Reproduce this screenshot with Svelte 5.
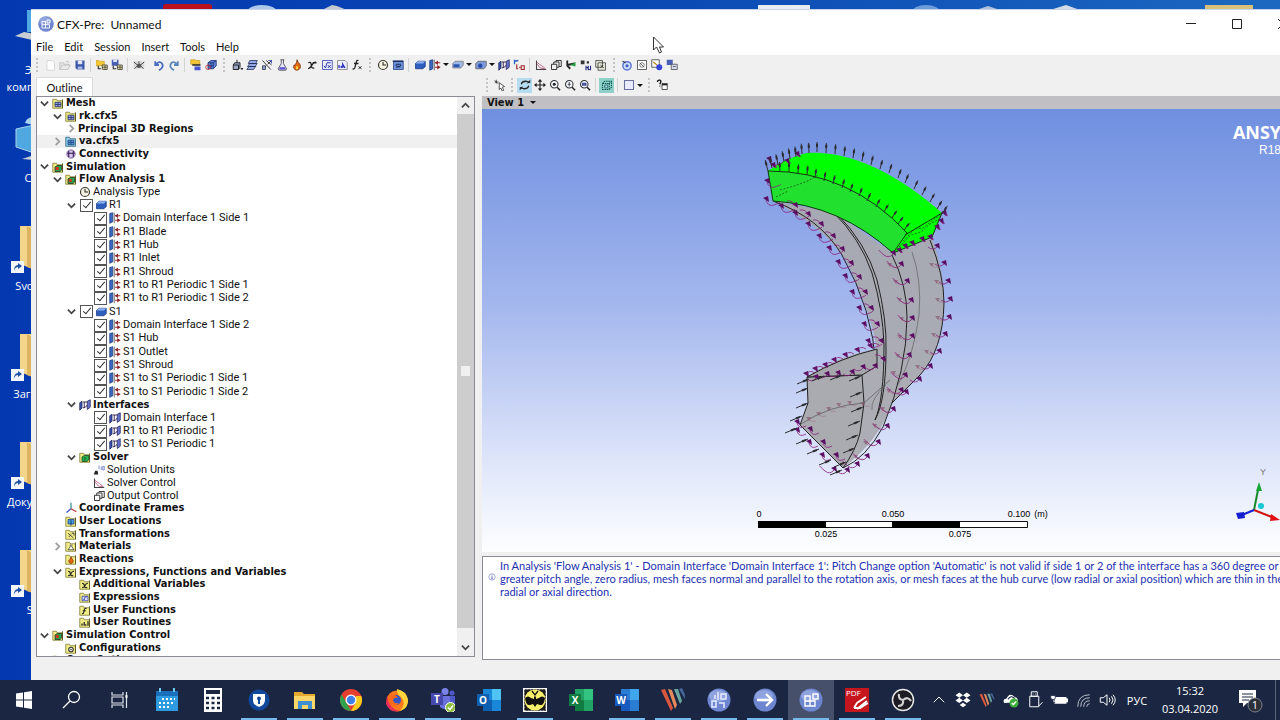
<script lang="ts">
  type Row = {
    level: number;
    label: string;
    icon: string;
    bold?: boolean;
    open?: boolean;
    branch?: boolean;
    checked?: boolean;
    selected?: boolean;
  };

  type Tool = { kind: string; icon?: string; title?: string; active?: boolean };

  const boundary = (label: string): Row => ({ level: 3, label, icon: 'boundary', checked: true });
  const joint = (label: string): Row => ({ level: 3, label, icon: 'interface', checked: true });
  const folder = (level: number, label: string, icon: string, more = {}): Row => ({ level, label, icon, bold: true, ...more });

  let rows: Row[] = $state([
    folder(0, 'Mesh', 'fMesh', { branch: true, open: true }),
    folder(1, 'rk.cfx5', 'fMesh', { branch: true, open: true }),
    folder(2, 'Principal 3D Regions', '', { branch: true }),
    folder(1, 'va.cfx5', 'fMeshBlue', { branch: true, selected: true }),
    folder(1, 'Connectivity', 'connect'),
    folder(0, 'Simulation', 'fSim', { branch: true, open: true }),
    folder(1, 'Flow Analysis 1', 'fSim', { branch: true, open: true }),
    { level: 2, label: 'Analysis Type', icon: 'clock' },
    { level: 2, label: 'R1', icon: 'domain', branch: true, open: true, checked: true },
    boundary('Domain Interface 1 Side 1'),
    boundary('R1 Blade'),
    boundary('R1 Hub'),
    boundary('R1 Inlet'),
    boundary('R1 Shroud'),
    boundary('R1 to R1 Periodic 1 Side 1'),
    boundary('R1 to R1 Periodic 1 Side 2'),
    { level: 2, label: 'S1', icon: 'domain', branch: true, open: true, checked: true },
    boundary('Domain Interface 1 Side 2'),
    boundary('S1 Hub'),
    boundary('S1 Outlet'),
    boundary('S1 Shroud'),
    boundary('S1 to S1 Periodic 1 Side 1'),
    boundary('S1 to S1 Periodic 1 Side 2'),
    folder(2, 'Interfaces', 'interface', { branch: true, open: true }),
    joint('Domain Interface 1'),
    joint('R1 to R1 Periodic 1'),
    joint('S1 to S1 Periodic 1'),
    folder(2, 'Solver', 'fSolver', { branch: true, open: true }),
    { level: 3, label: 'Solution Units', icon: 'units' },
    { level: 3, label: 'Solver Control', icon: 'graph' },
    { level: 3, label: 'Output Control', icon: 'pages' },
    folder(1, 'Coordinate Frames', 'axes'),
    folder(1, 'User Locations', 'fLocation'),
    folder(1, 'Transformations', 'fTransform'),
    folder(1, 'Materials', 'fFlask', { branch: true }),
    folder(1, 'Reactions', 'fFlame'),
    folder(1, 'Expressions, Functions and Variables', 'fVar', { branch: true, open: true }),
    folder(2, 'Additional Variables', 'fVar'),
    folder(2, 'Expressions', 'fExpr'),
    folder(2, 'User Functions', 'fFunc'),
    folder(2, 'User Routines', 'fRoutine'),
    folder(0, 'Simulation Control', 'fSim', { branch: true, open: true }),
    folder(1, 'Configurations', 'fConfig'),
    folder(0, 'Case Options', 'fConfig', { branch: true }),
  ]);

  const tool = (icon: string, title: string, active = false): Tool => ({ kind: 'tool', icon, title, active });
  const sep: Tool = { kind: 'sep' };
  const gap: Tool = { kind: 'gap' };
  const grip: Tool = { kind: 'grip' };
  const caret: Tool = { kind: 'caret', title: 'More' };

  const mainTools: Tool[] = [
    grip, tool('new', 'New Case'), tool('open', 'Open Case'), tool('save', 'Save Case'), sep,
    tool('importMesh', 'Import Mesh'), tool('exportMesh', 'Save Mesh'), sep,
    tool('camera', 'Save Picture'), gap, tool('undo', 'Undo'), tool('redo', 'Redo'), sep,
    tool('reload', 'Reload Mesh'), tool('meshView', 'Transform Mesh'), grip,
    tool('extrude', 'Domain'), tool('layers', 'Subdomain'), tool('transform', 'Transform'), tool('flask', 'Material'),
    tool('flame', 'Reaction'), tool('variable', 'Variable'), tool('expression', 'Expression'), tool('routine', 'User Routine'),
    tool('func', 'User Function'), grip, tool('clock', 'Analysis Type'), tool('physics', 'Physics'), sep,
    tool('domain', 'Domain'), tool('boundary', 'Boundary'), caret, tool('subdomain', 'Subdomain'), caret,
    tool('source', 'Source Point'), caret, tool('interface', 'Domain Interface'), tool('initial', 'Global Initialization'), sep,
    tool('graph', 'Solver Control'), tool('pages', 'Output Control'), tool('branch', 'Mesh Adaption'),
    tool('expert', 'Expert Parameters'), tool('configs', 'Configurations'), grip,
    tool('run', 'Define Run'), tool('solver', 'Start Solver'), tool('runSolver', 'Run Solver'), tool('saveAll', 'Write Solver File'),
  ];

  const viewTools: Tool[] = [
    grip, tool('select', 'Select'), grip, tool('rotate', 'Rotate', true), tool('pan', 'Pan'), tool('zoomIn', 'Zoom'),
    tool('zoomBox', 'Zoom Box'), tool('fit', 'Fit View'), sep, tool('highlight', 'Highlighting', true), sep,
    tool('viewport', 'Select Viewport'), caret, grip, tool('help', 'Help'),
  ];

  const menus = ['File', 'Edit', 'Session', 'Insert', 'Tools', 'Help'];

  const mag = '<circle cx="7" cy="7" r="5" fill="#f4f8ff" stroke="#333" stroke-width="1.4"/><path d="M10.800 11l4 4" stroke="#222" stroke-width="2"/>';
  const disk = '<path d="M2 2h12v12H4l-2-2z" fill="#3b54a8"/><path d="M5 2h6v5H5z" fill="#dfe6fa"/><path d="M5 10h6v4H5z" fill="#a9b8e6"/>';
  const yellow = '<path d="M1 3h5l1 2h7v10H1z" fill="#f1ec86" stroke="#77742c"/><path d="M14 3v12" stroke="#4a4713"/>';

  // 16 x 16 glyphs shared by the toolbars and the outline tree
  const glyphs: Record<string, string> = {
    new: '<path d="M4 2h7l3 3v10H4z" fill="#fff" stroke="#cfcfcf"/>',
    open: '<path d="M1 14V5h5l1 2h6v2M1 14l3-6h11l-3 6z" fill="#e9e9e9" stroke="#b9b9b9"/><path d="M9 4q3-3 4 1" fill="none" stroke="#aaa"/>',
    save: disk,
    importMesh: '<path d="M0 2h4l1 1h6v6H0z" fill="#f5c737" stroke="#c9a32a"/><path d="M8 8h7v6H9zM8 11h7M12 8v6" fill="#f2e9a0" stroke="#333"/><path d="M3 9v4h4" fill="none" stroke="#222" stroke-width="1.400"/>',
    exportMesh: '<path d="M1 1h9v8H1z" fill="#4a60b4"/><path d="M3 1h5v3H3z" fill="#dfe6fa"/><path d="M8 8h7v6H9zM8 11h7M12 8v6" fill="#f2e9a0" stroke="#333"/><path d="M3 9v4h4" fill="none" stroke="#222" stroke-width="1.400"/>',
    camera: '<path d="M1 3h14v10H1z" fill="#dadada"/><path d="M1 4l5 4M2 13l4-4M15 4l-5 4M14 13l-4-4M8 3v3" stroke="#444" stroke-width="1.300"/><circle cx="8" cy="9" r="3" fill="#555"/>',
    undo: '<path d="M3 3v5h5M4 7q5-5 8-1 3 5-4 9" fill="none" stroke="#4a6cc0" stroke-width="2.400"/>',
    redo: '<path d="M13 3v5H8M12 7Q7 2 4 6q-3 5 4 9" fill="none" stroke="#5b86b8" stroke-width="2.400"/>',
    reload: '<path d="M1 1h6l1 1h5v5H1z" fill="#f5c737" stroke="#c9a32a"/><path d="M6 10h8v5H6z" fill="#4a55d0"/><path d="M3 8h11" stroke="#222" stroke-width="2"/>',
    meshView: '<path d="M4 5l4-3h7v7l-4 4H4z" fill="#5f86d6" stroke="#152a6b"/><path d="M4 5h7v8M11 5l4-3M8 5v8M4 9h7" fill="none" stroke="#152a6b"/><circle cx="4" cy="11" r="3" fill="none" stroke="#b22"/>',
    extrude: '<path d="M3 8h7v6H3zM3 8l2-3h7v6l-2 3M8 5V1" fill="#9aa7c9" stroke="#222" stroke-width="1.300"/><path d="M13 13h3" stroke="#222" stroke-width="2"/>',
    layers: '<path d="M5 2h10l-2 4H3zM5 6h10l-3 4H2zM4 10h9l-3 4H1z" fill="#93a7e4" stroke="#222b55"/>',
    transform: '<path d="M2 2l11 12M7 2l7 6M14 2L9 7M2 14l5-5" stroke="#333" fill="none" stroke-width="1.300"/><path d="M2 9h4v5H2z" fill="#8c9fdd" stroke="#333"/><path d="M10 2h4v4" stroke="#2232b8" fill="none"/>',
    flask: '<path d="M6 1h5M7 1v5L3 13q0 2 2 2h7q2 0 2-2l-4-7V1" fill="#e6e8ff" stroke="#333"/><path d="M5 11h7l1 3H4z" fill="#5a4fd0"/>',
    flame: '<path d="M8 1q1 4 4 6 2 7-4 8-6-1-4-7 2 1 2-1 2-2 2-6z" fill="#e66a10" stroke="#6b2a06"/><path d="M8 9q3 4 0 5-3-1 0-5z" fill="#ffe14a"/>',
    variable: '<path d="M3 5q4-2 4 3t4 4M13 4Q9 5 8 8t-5 5M9 5h5" fill="none" stroke="#222" stroke-width="1.800"/>',
    expression: '<path d="M2 2h13v12H2z" fill="#eef" stroke="#2a35a8"/><path d="M4 9l2 3 2-7h5M9 8l4 4M13 8l-4 4" fill="none" stroke="#2a35a8" stroke-width="1.300"/>',
    routine: '<path d="M2 2h10l3 3v9H2z" fill="#eef" stroke="#777"/><path d="M4 8v4M7 9v3M9 12V7l3 5" stroke="#2a35c8" stroke-width="1.800" fill="none"/>',
    func: '<path d="M10 2Q7 1 7 5L5 12q-1 2-3 1M4 6h6" fill="none" stroke="#222" stroke-width="1.700"/><path d="M10 10l4 3M14 10l-4 3" stroke="#222" stroke-width="1.300"/>',
    clock: '<circle cx="8" cy="8" r="6" fill="#f7f4e4" stroke="#3a3a30" stroke-width="1.600"/><path d="M8 4v4h4" fill="none" stroke="#222" stroke-width="1.400"/>',
    physics: '<path d="M2 3h13v11H2z" fill="#6f93db" stroke="#223a80"/><path d="M1 3h14" stroke="#1d2f66" stroke-width="2"/><path d="M5 7h7M5 8q4 5 7 0M6 12q2-4 5-1" stroke="#1d2f66" stroke-width="1.400" fill="none"/>',
    domain: '<path d="M2 6l3-3h10v7l-3 3H2z" fill="#2f5fbd" stroke="#173a86"/><path d="M2 6l3-3h10l-3 3z" fill="#8fb2ef"/>',
    boundary: '<path d="M1 2l4-1v12l-4 2z" fill="#3a6ac4" stroke="#173a7a"/><path d="M7 1v14" stroke="#444"/><path d="M8 5h7M8 11h7" stroke="#a3262a" stroke-width="1.600"/><path d="M12 2v6L8 5zM11 8v6l4-3z" fill="#8a2226"/>',
    subdomain: '<path d="M1 6l3-3h11v5l-3 4H1z" fill="#9db7e6" stroke="#777"/><path d="M2 7h8v4H2z" fill="#2f56b0"/>',
    source: '<path d="M1 6l3-3h11v6l-3 4H1z" fill="#7f9cdc" stroke="#555"/><circle cx="7" cy="9" r="3" fill="#2a4cab"/>',
    interface: '<path d="M1 5l3-2v9l-3 3z" fill="#3a55b8" stroke="#1c2255"/><path d="M11 3l4-2v10l-4 3z" fill="#6672d0" stroke="#1c2255"/><path d="M5 4h6M5 12q4 0 6-4M7 4v8" fill="none" stroke="#3c2a55" stroke-width="1.300"/>',
    initial: '<path d="M2 1v6M2 3l5-1" stroke="#2f5fbd" stroke-width="1.800"/><path d="M5 7v6h2M8 11h2M11 9h4v5h-4z" fill="none" stroke="#a3262a" stroke-width="1.500"/>',
    graph: '<path d="M2 2v12h13" fill="none" stroke="#444" stroke-width="1.400"/><path d="M2 4l4 3 3 2 5 4M3 7l4 5 6 1" fill="none" stroke="#a8406a"/>',
    pages: '<path d="M2 7h7v7H2zM5 7V4h7v7h-3M8 4V2h7v8h-3" fill="none" stroke="#333" stroke-width="1.300"/>',
    branch: '<path d="M3 2v7l4 4M3 8l10-2" fill="none" stroke="#222" stroke-width="2.400"/><path d="M7 8l7-4v6z" fill="#1f9c3c"/>',
    expert: '<path d="M1 2h5v5H1zM9 3h3v3H9z" fill="#333"/><path d="M8 9v6M11 9v6M14 9v6M9 11l4 3" stroke="#222a7a" stroke-width="1.500"/>',
    configs: '<path d="M1 2h9v9H1zM4 5h10v10H4z" fill="#e8e8dc" stroke="#333"/><path d="M7 8l5 4M7 12l4-4" stroke="#333"/>',
    run: '<circle cx="8" cy="9" r="5.500" fill="#cfdcff" stroke="#5b78d0" stroke-width="2"/><circle cx="8" cy="9" r="2" fill="#3a57c0"/><path d="M2 3l4 2" stroke="#333" stroke-width="1.500"/>',
    solver: '<path d="M2 2h12v12H2z" fill="#fff" stroke="#333"/><circle cx="8" cy="8" r="3" fill="none" stroke="#555"/><path d="M5 5l6 6" stroke="#555"/>',
    runSolver: '<path d="M1 1h10v10H1z" fill="#fff" stroke="#333"/><path d="M3 4l5 4" stroke="#d08a10" stroke-width="2"/><circle cx="11" cy="11" r="4" fill="#3245d8"/>',
    saveAll: '<path d="M1 1h8v7H1z" fill="#4a60b4"/><path d="M7 7h8v7H7z" fill="#d7dcf0" stroke="#444"/><path d="M9 10h4" stroke="#444"/>',
    select: '<path d="M1 2l4 4M1 4h5M3 1v5" stroke="#222"/><path d="M7 5l7 5-3 1 2 4-2 1-2-4-2 2z" fill="#fff" stroke="#222"/>',
    rotate: '<path d="M3 7q1-4 6-4l4 1M13 9q-1 4-6 4l-4-1" fill="none" stroke="#222" stroke-width="1.700"/><path d="M10 6l5-1V1zM6 10l-5 1v4z" fill="#222"/>',
    pan: '<path d="M8 2v12M2 8h12" stroke="#222" stroke-width="1.500"/><path d="M8 0l3 3.500H5zM8 16l3-3.500H5zM0 8l3.500-3v6zM16 8l-3.500-3v6z" fill="#222"/>',
    zoomIn: mag + '<circle cx="7" cy="7" r="2" fill="#222"/>',
    zoomBox: mag + '<path d="M7 4v6M5 7h4" stroke="#222"/>',
    fit: mag + '<path d="M4 5h6v4H4z" fill="#4c4fa0"/>',
    highlight: '<path d="M2 6l3-3h9v8l-3 3H2zM2 6h9v8M11 6l3-3" fill="none" stroke="#0b5a54" stroke-width="1.400" stroke-dasharray="2 1"/><path d="M5 8h4v4H5z" fill="#9fd8d0" stroke="#1a5a70"/>',
    viewport: '<path d="M2 2h12v12H2z" fill="#e9ecff" stroke="#6a70a0" stroke-width="1.400"/>',
    help: '<path d="M2 4q0-3 3-2.500T5 7M5 9v1" fill="none" stroke="#111" stroke-width="1.800"/><path d="M8 6h7v8H8z" fill="#fff" stroke="#222"/><path d="M8 7.500h7" stroke="#222" stroke-width="2"/>',
    connect: '<circle cx="8" cy="8" r="5.500" fill="#d8c6ee" stroke="#54307c"/><path d="M5 4v8M11 4v8M3 7h10" stroke="#30194e" stroke-width="1.400"/>',
    units: '<path d="M1 14h6l-1-5H3z" fill="#222"/><path d="M8 2v5M11 3v5M13 3h2v5h-2z" stroke="#6074c8" fill="none"/>',
    axes: '<path d="M8 1v8" stroke="#2d8a8a" stroke-width="1.600"/><path d="M8 9l-6 5" stroke="#3a57c0" stroke-width="1.800"/><path d="M8 9l7 4" stroke="#c23a3a" stroke-width="1.800"/>',
    fMesh: yellow + '<path d="M4 7h8v6H4zM4 10h8M8 7v6" fill="#93a0e8" stroke="#1f2a60"/>',
    fMeshBlue: '<path d="M1 3h5l1 2h7v10H1z" fill="#8fd0e8" stroke="#2a5a7a"/><path d="M4 7h8v6H4zM4 10h8M8 7v6" fill="#5a90d8" stroke="#17417a"/>',
    fSim: yellow + '<path d="M4 8l3-2h6v5l-2 3H4z" fill="#1fa54a" stroke="#222"/><path d="M5 8h4v4H5z" fill="#d8321c"/>',
    fSolver: yellow + '<path d="M4 8l3-2h6v5l-2 3H4z" fill="#27b04e" stroke="#17401f"/><path d="M8 8v5" stroke="#17401f"/>',
    fLocation: yellow + '<path d="M4 6h8v6H4z" fill="#4aa0e0" stroke="#1c3f80"/><path d="M8 7v7" stroke="#1c3f80" stroke-width="1.500"/>',
    fTransform: yellow + '<path d="M4 7l7 6M5 12l3-3M9 7h3v3" fill="none" stroke="#444" stroke-width="1.300"/>',
    fFlask: yellow + '<path d="M7 6v3l-3 4h8l-3-4V6" fill="#fff" stroke="#333"/>',
    fFlame: yellow + '<path d="M8 5q1 3 3 5 0 4-3 4t-3-4q2-1 3-5z" fill="#e06a12" stroke="#8a3208"/>',
    fVar: yellow + '<path d="M4 7q3 0 3 3t4 3M12 7q-3 0-4 3t-4 3" fill="none" stroke="#222" stroke-width="1.500"/>',
    fExpr: yellow + '<path d="M4 7h8v6H4z" fill="#dfe2ff" stroke="#2a35a8"/><path d="M5 10l2 2 1-4h3" fill="none" stroke="#2a35a8"/>',
    fFunc: yellow + '<path d="M10 6q-3-1-3 3l-1 3q-1 1-2 1M5 9h4" fill="none" stroke="#222" stroke-width="1.500"/>',
    fRoutine: yellow + '<path d="M4 10v3M7 8v5M9 11v2M12 7v6" stroke="#222" stroke-width="1.700"/>',
    fConfig: yellow + '<circle cx="8" cy="10" r="3" fill="#fff" stroke="#333" stroke-width="1.500"/><circle cx="8" cy="10" r="1" fill="#222"/>',
    orb: '<circle cx="8" cy="8" r="7.800" fill="#6f86cf"/><ellipse cx="7" cy="5" rx="6" ry="4" fill="#a9b9e8" opacity=".6"/><path d="M4 5.500h3.500V12H4zM4 8.700h7.500V12H7.500M9 4h3v3H9z" fill="none" stroke="#fff" stroke-width=".9"/>',
  };

  const stripes = '<path d="M0 2l4-1 8 19-2 3z" fill="#d9573c"/><path d="M7 1l4 1 5 15-2 4z" fill="#e58a5c"/><path d="M13 1l4 0 4 12-2 3z" fill="#6aa7a0"/><path d="M18 1l3-1 4 9-1 2z" fill="#46689a"/>';
  const ball = '<circle cx="12" cy="12" r="11.500" fill="#6d86cf"/><ellipse cx="11" cy="8" rx="9" ry="6" fill="#a6b7e8" opacity=".6"/>';
  const office = (a: string, b: string, c: string, letter: string) =>
    `<path d="M6 1h18v22H6z" fill="${a}"/><path d="M15 1h9v11h-9z" fill="${b}"/><path d="M6 12h9v11H6z" fill="${c}"/><path d="M0 6h12v12H0z" fill="${c}"/><text x="6" y="15.500" text-anchor="middle" font-size="10" font-weight="700" fill="#fff">${letter}</text>`;

  // 24 x 24 taskbar glyphs
  const apps = [
    { name: 'Start', wide: true, art: '<path d="M4 5.500l7-1v7H4zM12 4.300l8-1.200v8.400h-8zM4 12.500h7v7l-7-1zM12 12.500h8v8.400l-8-1.200z" fill="#fff"/>' },
    { name: 'Search', wide: true, art: '<circle cx="14" cy="9" r="5.500" fill="none" stroke="#fff" stroke-width="1.300"/><path d="M10 13l-7 7" stroke="#fff" stroke-width="1.300"/>' },
    { name: 'Task View', wide: true, art: '<path d="M4 4v3h11V4M4 20v-3h11v3M4 9h11v6H4zM18.500 4v16" fill="none" stroke="#dfe3ea" stroke-width="1.200"/><path d="M17.500 7h2v3h-2z" fill="#fff"/>' },
    { name: 'Calendar', art: '<path d="M1 3h22v20H1z" fill="#2e9be0"/><path d="M1 3h22v5H1z" fill="#1a6fbd"/><path d="M5 0v4M19 0v4" stroke="#6cc8f4" stroke-width="2"/><path d="M7 11h13M4 15h16M4 19h12" stroke="#fff" stroke-width="2" stroke-dasharray="2 2"/>' },
    { name: 'Calculator', art: '<path d="M3 0h18v24H3z" fill="#fff"/><path d="M5 2h14v4H5z" fill="#1b2740"/><path d="M5 10h14M5 15h14M5 20h14" stroke="#1b2740" stroke-width="2.500" stroke-dasharray="3 2.500"/>' },
    { name: 'Password Manager', run: true, art: '<circle cx="12" cy="12" r="10.500" fill="#12489c"/><path d="M6 6h12v6q0 5-6 7-6-2-6-7z" fill="#fff"/><circle cx="12" cy="10.500" r="2" fill="#12489c"/><path d="M12 11v5" stroke="#12489c" stroke-width="2"/>' },
    { name: 'Explorer', run: true, art: '<path d="M1 4h8l2 2h11v15H1z" fill="#e5a92f"/><path d="M1 8h21v13H1z" fill="#fbd669"/><path d="M5 21v-8h14v8h-4v-4H9v4z" fill="#3f8fd2"/>' },
    { name: 'Chrome', run: true, art: '<circle cx="12" cy="12" r="11" fill="#e5402f"/><path d="M2.500 6.500L8 16l4 7A11 11 0 0 1 2.500 6.500z" fill="#2fa24c"/><path d="M12 23l5-9V8h5.300A11 11 0 0 1 12 23z" fill="#fbcb1c"/><circle cx="12" cy="12" r="5.500" fill="#fff"/><circle cx="12" cy="12" r="4.200" fill="#3f7fe8"/>' },
    { name: 'Firefox', run: true, art: '<circle cx="12" cy="13" r="10.500" fill="#ff7a1c"/><path d="M12 1q9 2 11 10 1 9-8 12 7-8 1-14-4-2-4-8z" fill="#ffd43a"/><path d="M2 8q2 12 12 15-9 2-13-7z" fill="#ee2f56"/><circle cx="11" cy="12" r="5" fill="#3556c8"/><path d="M4 7q6-2 9 3-4-1-5 2 1 4 6 3-5 5-9 1-3-4-1-9z" fill="#ff6a1a"/>' },
    { name: 'Teams', run: true, art: '<circle cx="14" cy="3.500" r="3.500" fill="#7b83eb"/><circle cx="21" cy="5" r="2.500" fill="#5059c9"/><path d="M9 8h11v10q-5 6-11 1z" fill="#6a71dc"/><path d="M19 8h5v8q-2 3-5 2z" fill="#5059c9"/><path d="M0 5h12v12H0z" fill="#4549ad"/><text x="6" y="14.500" text-anchor="middle" font-size="10" font-weight="700" fill="#fff">T</text><circle cx="19.500" cy="19.500" r="5" fill="#8cbf3a" stroke="#fff"/><path d="M17 19.500l2 2 3-4" fill="none" stroke="#fff" stroke-width="1.500"/>' },
    { name: 'Outlook', art: office('#1a86d8', '#4fc4f4', '#0f5fb0', 'O') },
    { name: 'The Bat!', run: true, art: '<path d="M0 0h24v24H0z" fill="#fff"/><path d="M1 1h22v22H1z" fill="#1c1c1c"/><path d="M.5 .5h23v23H.5z" fill="none" stroke="#fff" stroke-width="2" stroke-dasharray="2 1"/><circle cx="12" cy="12" r="10.500" fill="#f7f06a"/><path d="M2 10q3-3 6 0l3 1V8l1 1 1-1v3l3-1q3-3 6 0-1 8-5 7l-3-1-2 3-2-3-3 1q-4 1-5-7z" fill="#111"/><path d="M9 3l3 4 3-4" fill="none" stroke="#111" stroke-width="1.300"/>' },
    { name: 'Excel', art: office('#21a366', '#33c481', '#107c41', 'X') },
    { name: 'Word', run: true, art: office('#2b7cd3', '#41a5ee', '#185abd', 'W') },
    { name: 'Workbench', run: true, art: stripes },
    { name: 'TurboGrid', run: true, art: ball + '<path d="M5 13h4v6H5zM8 7v4M11 4v8M14 6h5v5h-5zM12 15h5v5" fill="none" stroke="#e8ecff" stroke-width="1.500"/>' },
    { name: 'CFX-Solver', run: true, art: ball + '<path d="M4 12h15M13 6l6 6-6 6" fill="none" stroke="#fff" stroke-width="2.400"/>' },
    { name: 'CFX-Pre', run: true, active: true, art: ball + '<path d="M6 8h5v10H6zM6 13h10v5h-5M14 6h5v5h-5z" fill="none" stroke="#fff" stroke-width="1.400"/>' },
    { name: 'PDF Editor', run: true, art: '<path d="M0 0h24v24H0z" fill="#c5161d"/><text x="1" y="8" font-size="8" fill="#fff">PDF</text><path d="M9 20l3-5 9-6M12 21l10-8M9 20l6 0 8-5" fill="none" stroke="#fff" stroke-width="1.800"/>' },
    { name: 'OBS', run: true, art: '<circle cx="12" cy="12" r="10.500" fill="#1c1c22" stroke="#e6e6e6" stroke-width="1.500"/><path d="M12 12q-5-1-4-6M12 12q5-4 8 1M12 12q1 6-5 6" fill="none" stroke="#d0d0d0" stroke-width="2.200"/>' },
  ];

  const tray = [
    { name: 'Hidden icons', art: '<path d="M5 15l7-7 7 7" fill="none" stroke="#fff" stroke-width="1.300"/>' },
    { name: 'Dropbox', art: '<path d="M7 2l5 3.500L7 9 2 5.500zM17 2l5 3.500-5 3.500-5-3.500zM7 9l5 3.500L7 16l-5-3.500zM17 9l5 3.500-5 3.500-5-3.500zM7.500 18.500l4.500-3 4.500 3-4.500 3z" fill="#fff"/>' },
    { name: 'Workbench', art: '<g transform="translate(2 3) scale(.8)">' + stripes + '</g>' },
    { name: 'Cloud', art: '<path d="M3 16q-3-5 3-6 4-9 11-2 5 1 4 7z" fill="#fff"/><path d="M8 11q4-6 9-1" stroke="#1b2740" fill="none" stroke-width="1.500"/><circle cx="16" cy="16" r="6" fill="#3fae3a"/><path d="M13 16l2 2 4-4" stroke="#fff" stroke-width="1.800" fill="none"/>' },
    { name: 'USB', art: '<path d="M7 1h8v6H7zM5 7h12v14H5zM9 4h1M12 4h1M17 20l5-5" fill="none" stroke="#fff" stroke-width="1.300"/>' },
    { name: 'Battery', art: '<path d="M6 8h16v9H6zM22 10h2v5h-2z" fill="#fff"/><path d="M1 6h6v4q-3 3-6 0zM3 3v3M6 3v3M4 11v4h3" fill="#fff" stroke="#1b2740"/>' },
    { name: 'Network', art: '<path d="M5 21Q5 5 21 5M9 21Q9 9 21 9M13 21q0-8 8-8M17 21q0-4 4-4" fill="none" stroke="#b9c0cc" stroke-width="1.300"/>' },
    { name: 'Volume', art: '<path d="M3 9h4l5-4v14l-5-4H3zM15 9q2 3 0 6M18 7q4 5 0 10M20 5q6 7 0 14" fill="none" stroke="#fff" stroke-width="1.300"/>' },
  ];

  const shortcuts = ['Этот компьютер', 'Сеть', 'Svodnye', 'Загрузки', 'Документы', 'Soft'];

  // small arrows on the inlet and outlet faces, as [x, y, dx, dy]
  const arrows: number[][] = [];
  const topRim = [[768,171],[772,168],[778,165],[784,162],[790,159],[796,157],[802,154],[809,153],[817,152],[826,153],[835,154],[844,156],[853,158],[862,161],[871,165],[880,169],[889,173],[898,178],[905,183],[914,189],[922,195],[930,202],[937,209],[942,214]];
  const lowRim = [[780,172],[789,172],[798,174],[807,175],[815,178],[824,181],[833,184],[842,188],[850,192],[859,196],[867,201],[876,207],[884,212],[892,218],[898,224],[904,230]];
  topRim.forEach(([x, y], i) => arrows.push([x, y, (i - 8) * 0.35, -11 + i / 8]));
  lowRim.forEach(([x, y], i) => arrows.push([x, y, (i - 1) * 0.4, -10 + i / 5]));
  const inflow = [[809,379],[808,388],[808,403],[802,416],[797,428],[808,439],[819,449],[831,460],[842,470],[824,376],[842,375],[861,376],[862,392],[863,407],[860,421],[858,435],[855,448],[846,462]];
  inflow.forEach(([x, y]) => arrows.push([x - 12, y + 5, 12, -5]));

  // periodic boundary markers: the tail runs towards the paired face
  const leftEdge = [[769,160],[767,182],[766,200],[781,207],[795,214],[808,225],[819,237],[829,249],[838,263],[845,277],[852,293],[859,309],[864,325],[868,342]];
  const leftInner = [[795,206],[808,215],[821,225],[833,237],[842,250],[851,264],[859,278],[865,293],[871,309],[877,325],[881,342],[883,360]];
  const midEdge = [[893,254],[901,265],[907,282],[911,301],[912,319],[912,337],[909,356],[905,376],[901,391],[893,410],[887,427],[878,443],[867,457],[857,465],[847,471],[834,470]];
  const rightEdge = [[937,247],[944,264],[948,282],[950,300],[949,318],[945,335],[939,352],[930,367],[919,380],[906,393]];
  const hubTop = [[806,375],[815,370],[825,366],[834,361],[845,356],[857,351],[870,347]];
  const hubLow = [[816,378],[827,375],[838,374],[852,373],[863,368],[875,367]];
  const bottomLeft = [[797,423],[797,431],[809,443],[822,456],[836,456],[823,443],[810,430]];
  const greenEdge = [[773,166],[787,162],[797,155],[905,247],[912,244],[922,240],[930,238],[941,222],[944,214],[937,228],[899,251]];
  const markers = [
    ...leftEdge.map((p) => ({ p, tail: 'q2 7 8 5t6-3' })),
    ...leftInner.map((p) => ({ p, tail: 'q-2-6-8-5' })),
    ...midEdge.map((p) => ({ p, tail: 'q-4 5-9 1t-5-5' })),
    ...rightEdge.map((p) => ({ p, tail: 'q-4 4-9 0' })),
    ...hubTop.map((p) => ({ p, tail: 'q3-6 9-2' })),
    ...hubLow.map((p) => ({ p, tail: 'q-4 5-9 1' })),
    ...bottomLeft.map((p) => ({ p, tail: 'q2 7 9 3' })),
    ...greenEdge.map((p) => ({ p, tail: 'q2 3 4 1' })),
  ];
  const faint = [[889,265],[895,282],[899,300],[901,319],[899,337],[897,356],[893,373],[888,391],[882,409],[874,426],[865,443],[855,457],[931,265],[936,282],[937,300],[937,318],[933,335],[926,352],[917,367],[808,419],[818,414],[828,409],[838,405],[849,403],[862,404]];
</script>

{#snippet glyph(name: string)}
  <svg class="glyph" viewBox="0 0 16 16" aria-hidden="true">{@html glyphs[name]}</svg>
{/snippet}

{#snippet toolbar(items: Tool[])}
  {#each items as item}
    {#if item.kind === 'tool'}
      <button class="tool" class:active={item.active} class:teal={item.icon === 'highlight'} title={item.title} aria-label={item.title}>
        {@render glyph(item.icon ?? '')}
      </button>
    {:else if item.kind === 'caret'}
      <button class="caret" title={item.title} aria-label={item.title}></button>
    {:else}
      <span class={item.kind}></span>
    {/if}
  {/each}
{/snippet}

<div class="screen">
  <div class="desktop">
    <svg class="top-icons" viewBox="0 0 1280 10" preserveAspectRatio="xMinYMin slice" aria-hidden="true">
      <path d="M163 10V6q0-2 3-2h42q4 0 4 2v4z" fill="#b8101c" />
      <ellipse cx="262" cy="12" rx="15" ry="7" fill="#a9c8ea" />
      <path d="M322 10l10-5 5 1 10 4z" fill="#c4c8cc" />
      <path d="M758 5h52v5h-52z" fill="#e8ecf2" />
      <ellipse cx="926" cy="12" rx="14" ry="7" fill="#6d9cd8" />
      <path d="M976 10l12-4 12 4z" fill="#aebfdc" />
      <path d="M1050 10l16-5 14 5z" fill="#d3dbe8" />
      <path d="M1205 5h48v5h-48z" fill="#d8c27a" />
    </svg>
    <div class="shortcuts">
      {#each shortcuts as name, i}
        <div class="shortcut">
          <svg viewBox="0 0 74 48" aria-hidden="true">
            {#if i === 0}
              <path d="M27 1h30v22H27z" fill="#4fa8e0" />
              <path d="M15 27l9-4 12 2v7z" fill="#c9ced4" />
            {:else if i === 1}
              <path d="M16 12l18-4v28l-18-6z" fill="#4fa8e0" stroke="#a9d2ee" />
              <path d="M25 6q2-6 8-6v8z" fill="#a9d2ee" />
              <path d="M22 42l12-4v5z" fill="#c9ced4" />
            {:else}
              <path d="M20 1h30v42H30l-10-4z" fill="#f3d58c" />
              <path d="M27 1l5 3v40l-5-2z" fill="#dcb55e" />
              <path d="M11 36h13v12H11z" fill="#f2f6fb" />
              <path d="M14 46q0-6 4-6v-2l4 3-4 3v-2q-3 0-4 4z" fill="#1e4fa5" />
            {/if}
          </svg>
          <span>{name}</span>
        </div>
      {/each}
    </div>

    <div class="window">
      <header class="titlebar">
        {@render glyph('orb')}
        <h1>CFX-Pre:&nbsp; Unnamed</h1>
        <div class="controls">
          <button aria-label="Minimize"><svg viewBox="0 0 12 12"><path d="M1 5.500h10" stroke="#222" /></svg></button>
          <button aria-label="Maximize"><svg viewBox="0 0 12 12"><path d="M1.500 1.500h9v9h-9z" fill="none" stroke="#222" /></svg></button>
          <button aria-label="Close"><svg viewBox="0 0 12 12"><path d="M1 1l10 10M11 1L1 11" stroke="#222" /></svg></button>
        </div>
      </header>

      <nav class="menubar">
        {#each menus as menu}
          <button>{menu}</button>
        {/each}
      </nav>

      <div class="toolbar">{@render toolbar(mainTools)}</div>

      <main class="panes">
        <section class="outline">
          <div class="tabs"><button class="tab">Outline</button></div>
          <div class="tree-box">
            <ul class="tree">
              {#each rows as row}
                <li class="row level-{row.level}" class:bold={row.bold} class:selected={row.selected} class:tall={row.checked !== undefined}>
                  {#if row.branch}
                    <button class="expander" class:open={row.open} aria-label="Toggle {row.label}" onclick={() => (row.open = !row.open)}>
                      <svg viewBox="0 0 10 10"><path d={row.open ? 'M1 3l4 4 4-4' : 'M3 1l4 4-4 4'} /></svg>
                    </button>
                  {:else}
                    <span class="expander"></span>
                  {/if}
                  {#if row.checked !== undefined}
                    <label>
                      <input type="checkbox" bind:checked={row.checked} />
                      {@render glyph(row.icon)}
                      <span>{row.label}</span>
                    </label>
                  {:else}
                    {#if row.icon}{@render glyph(row.icon)}{/if}
                    <span>{row.label}</span>
                  {/if}
                </li>
              {/each}
            </ul>
            <div class="scrollbar">
              <button aria-label="Scroll up"><svg viewBox="0 0 10 10"><path d="M1 7l4-4 4 4" /></svg></button>
              <div class="thumb"><i></i></div>
              <button aria-label="Scroll down"><svg viewBox="0 0 10 10"><path d="M1 3l4 4 4-4" /></svg></button>
            </div>
          </div>
        </section>

        <section class="viewer">
          <div class="toolbar view-tools">{@render toolbar(viewTools)}</div>
          <button class="view-name">View 1 <i class="arrow"></i></button>
          <div class="viewport">
            <svg class="model" viewBox="740 130 230 360" aria-label="Rotor and stator passage">
              <g fill="#a9a9ad" stroke="#222" stroke-width="1">
                <path d="M893 253L932 238Q944 270 944 303 943 350 920 375L892 403Q880 440 843 468L800 425 808 403 807 377Q840 355 877 349 872 318 855 280 840 235 773 201L833 212z" fill-opacity=".9" stroke="none" />
                <path d="M773 201Q820 218 842 255 873 310 876 367" fill="none" />
                <path d="M833 212Q860 238 872 273 883 310 884 345 884 400 875 420M837 214Q866 243 877 280 887 320 886 350 886 400 875 420M892 255Q907 285 907 317 907 370 883 427 866 458 843 468M930 240Q944 275 944 303 943 350 920 375L892 403" fill="none" />
                <path d="M912 252Q922 280 919 315 914 355 898 385M886 385Q870 400 872 410" fill="none" stroke="#555" stroke-width=".6" />
                <path d="M807 377L862 375 864 403 860 433Q856 450 843 468L800 425 808 403z" fill="#a9abb0" />
                <path d="M807 377Q840 358 877 349V366L862 375z" fill="#a6a7ac" />
              </g>
              <path d="M768 171Q785 158 807 153 870 150 942 213L932 237 893 253Q840 205 773 201z" fill="#00ff00" />
              <path d="M768 171Q850 171 907 233L893 253Q840 205 773 201z" fill="#22e02e" stroke="#103a10" />
              <path d="M942 213L932 237 893 253M905 235l37-22" fill="none" stroke="#123312" />
              <path d="M780 190l14-4 14-5 10-6M776 197l12-6M899 247l12-12 10-3 9-8 9-5M903 241l12-12 8-1 10-8 8-5" fill="none" stroke="#156b1a" stroke-width=".9" stroke-dasharray="2 1.500" />
              <path d="M801 424Q830 405 864 403L890 380" fill="none" stroke="#555" stroke-width=".7" />
              {#each faint as [x, y]}
                <path d="M{x - 2} {y - 2}h5l-2 4z" fill="#85576f" opacity=".65" />
                <path d="M{x} {y}q4 4 8 2" fill="none" stroke="#96536f" stroke-width=".7" opacity=".5" />
              {/each}
              {#each markers as { p: [x, y], tail }}
                <path d="M{x - 3} {y - 2}l5-2 1 6z" fill="#5a0d62" />
                <path d="M{x} {y}{tail}" fill="none" stroke="#8a1f7c" stroke-width=".8" />
              {/each}
              {#each arrows as [x, y, dx, dy]}
                <path d="M{x} {y}l{dx} {dy}" stroke="#2c2c30" stroke-width="1" />
                <path d="M{x + dx / 2} {y + dy / 2}l{dx / 3} {dy / 3}" stroke="#2c2c30" stroke-width="2" />
              {/each}
            </svg>

            <div class="brand"><strong>ANSYS</strong><span>R18.1</span></div>

            <svg class="ruler" viewBox="0 0 300 32" aria-label="Scale">
              <path d="M2.500 13.500h269v6h-269z" fill="#fff" stroke="#111" />
              <path d="M2 13h68v7H2zM136 13h68v7h-68z" fill="#000" />
              <g text-anchor="middle">
                <text x="3" y="9">0</text><text x="137" y="9">0.050</text><text x="263" y="9">0.100</text>
                <text x="285" y="9">(m)</text><text x="70" y="29">0.025</text><text x="204" y="29">0.075</text>
              </g>
            </svg>

            <svg class="triad" viewBox="0 0 60 60" aria-label="Axes">
              <text x="28" y="10" fill="#777">Y</text>
              <path d="M22 45l4-20" stroke="#128a2a" stroke-width="2" />
              <path d="M27 17l3 9h-6z" fill="#17a535" />
              <path d="M22 45l20 8" stroke="#d01515" stroke-width="2" />
              <path d="M39 49l9 6-10 1z" fill="#e01010" />
              <path d="M22 45l-12 5" stroke="#1620d0" stroke-width="2" />
              <path d="M12 47l-8 1 2 6 7-1z" fill="#1620d0" />
              <circle cx="29" cy="41" r="3" fill="#16c7d4" />
            </svg>
          </div>

          <div class="messages">
            <svg viewBox="0 0 10 10" aria-hidden="true"><circle cx="5" cy="5" r="4" fill="#fff" stroke="#8f9bd0" /><path d="M5 4v4M5 2v1" stroke="#2a35a8" /></svg>
            <p>
              In Analysis 'Flow Analysis 1' - Domain Interface 'Domain Interface 1': Pitch Change option 'Automatic' is not valid if side 1 or 2 of the interface has a 360 degree or<br />
              greater pitch angle, zero radius, mesh faces normal and parallel to the rotation axis, or mesh faces at the hub curve (low radial or axial position) which are thin in the<br />
              radial or axial direction.
            </p>
          </div>
        </section>
      </main>
      <footer class="statusbar"></footer>
    </div>

    <svg class="pointer" viewBox="0 0 12 18" aria-hidden="true"><path d="M1.500 1v13l3-3 3 6 2-1-2-5h4z" fill="#fff" stroke="#333" /></svg>
  </div>

  <footer class="taskbar">
    {#each apps as app}
      <button class="app" class:wide={app.wide} class:run={app.run} class:current={app.active} title={app.name} aria-label={app.name}>
        <svg viewBox="0 0 24 24">{@html app.art}</svg>
      </button>
    {/each}
    <div class="tray">
      {#each tray as item}
        <button class="tray-icon" title={item.name} aria-label={item.name}><svg viewBox="0 0 24 24">{@html item.art}</svg></button>
      {/each}
      <button class="lang">РУС</button>
      <button class="time"><span>15:32</span><span>03.04.2020</span></button>
      <button class="notes" aria-label="Notifications">
        <svg viewBox="0 0 28 28">
          <path d="M3 4h17v13h-9l-4 4v-4H3z" fill="#fff" />
          <path d="M6 8h11M6 11h11M6 14h7" stroke="#1b2740" />
          <circle cx="19" cy="19" r="7" fill="#2b2f38" stroke="#7a808c" />
          <text x="19" y="23" text-anchor="middle" font-size="11" fill="#fff">1</text>
        </svg>
      </button>
    </div>
  </footer>
</div>

<style>
  :global(body) {
    overflow: hidden;
  }

  .screen {
    display: flex;
    flex-direction: column;
    height: 100vh;
    font-family: Roboto, "Noto Sans", sans-serif;
    font-size: 11px;
    color: #111;
    overflow: hidden;
  }

  button {
    margin: 0;
    padding: 0;
    border: 0;
    background: none;
    font: inherit;
    color: inherit;
  }

  svg {
    display: block;
  }

  .desktop {
    position: relative;
    flex: 1;
    min-height: 0;
    display: flex;
    padding-top: 9px;
    background: linear-gradient(90deg, #0338b0, #0a48b4 50%, #1c68c0);
    overflow: hidden;
  }

  .top-icons {
    position: absolute;
    left: 0;
    top: 0;
    width: 100%;
    height: 10px;
  }

  .shortcuts {
    flex: none;
    width: 31px;
    overflow: hidden;
    color: #fff;
    font-family: "Open Sans", sans-serif;
  }

  .shortcut {
    width: 74px;
    height: 108px;
    display: flex;
    flex-direction: column;
    gap: 4px;
    align-items: center;
    text-align: center;
    line-height: 17px;
  }

  .shortcut svg {
    flex: none;
    width: 74px;
    height: 48px;
  }

  .window {
    position: relative;
    flex: 1;
    min-width: 0;
    display: flex;
    flex-direction: column;
    margin-right: -60px;
    background: #f0f0f0;
    border-top: 1px solid #c8d4ec;
  }

  .titlebar {
    display: flex;
    align-items: center;
    height: 28px;
    padding: 0 34px 0 7px;
    background: #fff;
  }

  .titlebar .glyph {
    width: 16px;
    height: 16px;
  }

  h1 {
    margin: 0 0 0 3px;
    font: 12px Lato, sans-serif;
    flex: 1;
  }

  .controls {
    display: flex;
  }

  .controls button {
    width: 46px;
    display: flex;
    justify-content: center;
  }

  .controls svg {
    width: 12px;
    height: 12px;
  }

  .menubar {
    display: flex;
    gap: 11px;
    height: 17px;
    padding-left: 5px;
    background: #fff;
    font-family: Lato, sans-serif;
  }

  .toolbar {
    display: flex;
    align-items: center;
    height: 19px;
  }

  .glyph {
    flex: none;
    width: 12px;
    height: 12px;
  }

  .tool {
    flex: none;
    display: flex;
    align-items: center;
    justify-content: center;
    width: 15px;
    height: 15px;
  }

  .tool.active {
    background: #b5dcf0;
  }

  .tool.teal {
    background: #8fd0c8;
  }

  .caret,
  .sep,
  .gap,
  .grip {
    flex: none;
    display: flex;
    justify-content: center;
    align-items: center;
    width: 8px;
    height: 16px;
  }

  .caret::before,
  .arrow {
    content: "";
    border: 3px solid transparent;
    border-top-color: #111;
    border-bottom: 0;
  }

  .sep {
    width: 7px;
  }

  .gap {
    width: 5px;
  }

  .sep::before {
    content: "";
    height: 14px;
    border-left: 1px solid #d2d2d2;
  }

  .grip {
    width: 11px;
  }

  .view-tools .grip {
    width: 10px;
  }

  .grip::before {
    content: "";
    height: 14px;
    border-left: 2px dotted #c4c4c4;
  }

  .panes {
    flex: 1;
    min-height: 0;
    display: flex;
    gap: 7px;
    padding-left: 5px;
  }

  .outline {
    flex: none;
    width: 439px;
    display: flex;
    flex-direction: column;
    padding-bottom: 3px;
  }

  .tabs {
    height: 22px;
    display: flex;
    align-items: flex-end;
  }

  .tab {
    width: 57px;
    height: 19px;
    background: #fff;
    border: 1px solid #dcdcdc;
    border-bottom: 0;
    font-family: Lato, sans-serif;
  }

  .tree-box {
    flex: 1;
    min-height: 0;
    display: flex;
    border: 1px solid #8a8d94;
    background: #fff;
    overflow: hidden;
  }

  .tree {
    flex: 1;
    display: flex;
    flex-direction: column;
    margin: 0 0 -11px;
    padding: 0;
    list-style: none;
  }

  .row {
    flex: 20 0 0;
    min-height: 0;
    display: flex;
    align-items: center;
    line-height: 12px;
    white-space: nowrap;
  }

  .row.tall {
    flex-grow: 21;
  }

  .row label {
    display: flex;
    align-items: center;
  }

  .row.bold {
    font-family: "DejaVu Sans Condensed", sans-serif;
    font-weight: 700;
  }

  .row.selected {
    background: #f0f0f0;
  }

  .level-1 {
    padding-left: 13px;
  }

  .level-2 {
    padding-left: 27px;
  }

  .level-3 {
    padding-left: 41px;
  }

  .row .glyph {
    margin: 0 2px 0 1px;
  }

  .expander {
    flex: none;
    width: 14px;
    display: flex;
    justify-content: center;
  }

  .expander svg,
  .scrollbar svg {
    width: 9px;
    height: 9px;
    fill: none;
    stroke: #a0a0a0;
    stroke-width: 2;
  }

  .expander.open svg,
  .scrollbar svg {
    stroke: #444;
  }

  input {
    appearance: none;
    flex: none;
    width: 13px;
    height: 13px;
    margin: 0 1px 0 2px;
    border: 1px solid #555;
    background: #fff;
    display: flex;
    justify-content: center;
  }

  input:checked::before {
    content: "";
    width: 3px;
    height: 7px;
    border: solid #333;
    border-width: 0 1px 1px 0;
    transform: rotate(40deg);
  }

  .scrollbar {
    width: 17px;
    display: flex;
    flex-direction: column;
    background: #f0f0f0;
  }

  .scrollbar button {
    height: 17px;
    display: flex;
    align-items: center;
    justify-content: center;
  }

  .thumb {
    flex: 1;
    margin-bottom: 11px;
    background: #cdcdcd;
    display: flex;
    align-items: center;
    justify-content: center;
  }

  .thumb i {
    width: 9px;
    height: 10px;
    background: #f0f0f0;
  }

  .viewer {
    flex: 1;
    min-width: 0;
    display: flex;
    flex-direction: column;
  }

  .view-tools {
    height: 22px;
  }

  .view-name {
    height: 13px;
    padding-left: 5px;
    display: flex;
    align-items: center;
    gap: 6px;
    background: #c0c0c4;
    font-family: "DejaVu Sans Condensed", sans-serif;
    font-weight: 700;
  }

  .viewport {
    position: relative;
    flex: 1;
    background: linear-gradient(#6f8fe0, #a5b8ee 45%, #dfe6fa 80%, #fdfeff);
    overflow: hidden;
  }

  .model {
    position: absolute;
    left: 258px;
    top: 21px;
    width: 230px;
    height: 360px;
  }

  .brand {
    position: absolute;
    top: 12px;
    right: 49px;
    display: flex;
    flex-direction: column;
    align-items: flex-end;
    color: #fff;
    font: 12px "Liberation Sans", sans-serif;
  }

  .brand strong {
    font: 700 18px/22px "Open Sans", sans-serif;
  }

  .ruler {
    position: absolute;
    left: 274px;
    bottom: 12px;
    width: 300px;
    height: 32px;
    font: 9px "Liberation Sans", sans-serif;
  }

  .triad {
    position: absolute;
    right: 48px;
    bottom: 27px;
    width: 60px;
    height: 60px;
    font: 9px "Liberation Sans", sans-serif;
  }

  .messages {
    display: flex;
    align-items: flex-start;
    height: 102px;
    margin-top: 4px;
    border: 1px solid #8a8d94;
    background: #fff;
    color: #2230b0;
    font-family: Lato, sans-serif;
    white-space: nowrap;
  }

  .messages svg {
    flex: none;
    width: 8px;
    height: 8px;
    margin: 16px 4px 0 5px;
  }

  .messages p {
    margin: 2px 0 0;
    line-height: 13px;
  }

  .statusbar {
    height: 20px;
  }

  .pointer {
    position: absolute;
    left: 652px;
    top: 36px;
    width: 12px;
    height: 18px;
  }

  .taskbar {
    flex: none;
    display: flex;
    height: 40px;
    background: #1b2742;
    color: #fff;
    font-family: "Open Sans", sans-serif;
    overflow: hidden;
  }

  .app {
    flex: none;
    width: 46px;
    display: flex;
    align-items: center;
    justify-content: center;
    border-bottom: 2px solid transparent;
    border-top: 2px solid transparent;
  }

  .app.wide {
    width: 48px;
  }

  .app.run {
    background: linear-gradient(#76b9ed, #76b9ed) center bottom / 36px 2px no-repeat border-box;
  }

  .app.current {
    background-color: #46506a;
  }

  .app svg {
    width: 24px;
    height: 24px;
  }

  .tray {
    flex: 1;
    display: flex;
    align-items: center;
    justify-content: flex-end;
  }

  .tray-icon {
    width: 24px;
    display: flex;
    justify-content: center;
  }

  .tray-icon svg {
    width: 18px;
    height: 18px;
  }

  .lang {
    width: 36px;
    font-size: 11px;
  }

  .time {
    width: 70px;
    display: flex;
    flex-direction: column;
    align-items: center;
    line-height: 18px;
  }

  .notes {
    width: 51px;
    height: 40px;
    margin-right: 4px;
    display: flex;
    align-items: center;
    justify-content: center;
    border-right: 1px solid #5a6478;
  }

  .notes svg {
    width: 28px;
    height: 28px;
  }
</style>
